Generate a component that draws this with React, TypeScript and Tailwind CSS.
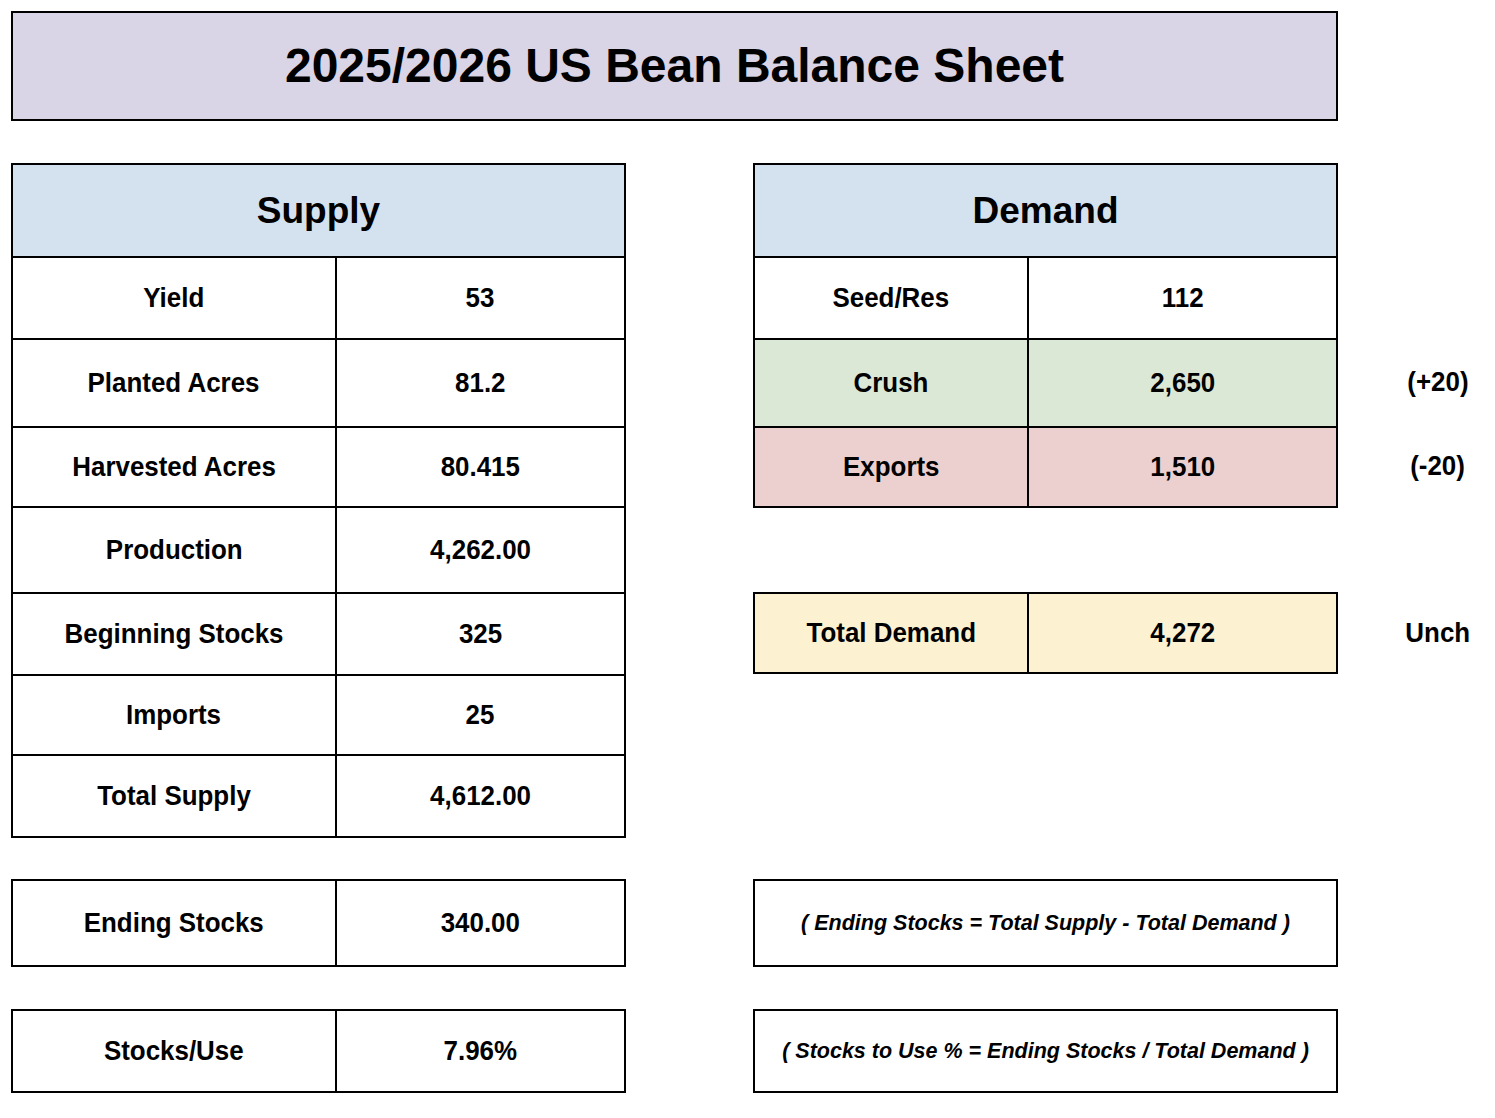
import React from "react";

type Row = {
  label: string;
  value: string;
  h: string;
  bg?: string;
};

const supplyRows: Row[] = [
  { label: "Yield", value: "53", h: "h-[82px]" },
  { label: "Planted Acres", value: "81.2", h: "h-[88px]" },
  { label: "Harvested Acres", value: "80.415", h: "h-[80px]" },
  { label: "Production", value: "4,262.00", h: "h-[86px]" },
  { label: "Beginning Stocks", value: "325", h: "h-[82px]" },
  { label: "Imports", value: "25", h: "h-[80px]" },
  { label: "Total Supply", value: "4,612.00", h: "h-[82px]" },
];

const demandRows: Row[] = [
  { label: "Seed/Res", value: "112", h: "h-[82px]", bg: "bg-white" },
  { label: "Crush", value: "2,650", h: "h-[88px]", bg: "bg-[#dce8d6]" },
  { label: "Exports", value: "1,510", h: "h-[80px]", bg: "bg-[#ecd0d0]" },
];

// the sheet's bold text is a touch narrower than plain Arial bold
const Squeeze = ({ children }: { children: React.ReactNode }) => (
  <span className="inline-block scale-x-[0.96]">{children}</span>
);

const TableRow = ({ row, labelW, top = true }: { row: Row; labelW: string; top?: boolean }) => (
  <div className={`flex ${row.h} ${top ? "border-t-2" : ""} border-black ${row.bg ?? "bg-white"}`}>
    <div className={`${labelW} flex items-center justify-center text-[27px] font-bold`}>
      <Squeeze>{row.label}</Squeeze>
    </div>
    <div className="flex-1 flex items-center justify-center border-l-2 border-black text-[27px] font-bold">
      <Squeeze>{row.value}</Squeeze>
    </div>
  </div>
);

const Formula = ({ text, h, className }: { text: string; h: string; className: string }) => (
  <div className={`${h} border-2 border-black flex items-center justify-center ${className}`}>
    <span className="text-[21.5px] font-bold italic">{text}</span>
  </div>
);

const App = () => {
  return (
    <div className="w-[1495px] min-h-[1118px] bg-white pl-[11px] pt-[11px] text-black font-['Liberation_Sans',Arial,sans-serif]">
      <div className="w-[1327px] h-[110px] border-2 border-black bg-[#d9d4e6] flex items-center justify-center">
        <h1 className="text-[48px] font-bold leading-none">2025/2026 US Bean Balance Sheet</h1>
      </div>

      <div className="flex mt-[42px]">
        {/* supply side */}
        <div className="w-[615px] flex flex-col">
          <div className="border-2 border-black">
            <div className="h-[91px] bg-[#d4e2f0] flex items-center justify-center text-[37px] font-bold">Supply</div>
            {supplyRows.map((r) => (
              <TableRow key={r.label} row={r} labelW="w-[322px]" />
            ))}
          </div>
          <div className="mt-[41px] border-2 border-black">
            <TableRow row={{ label: "Ending Stocks", value: "340.00", h: "h-[84px]" }} labelW="w-[322px]" top={false} />
          </div>
          <div className="mt-[42px] border-2 border-black">
            <TableRow row={{ label: "Stocks/Use", value: "7.96%", h: "h-[80px]" }} labelW="w-[322px]" top={false} />
          </div>
        </div>

        {/* demand side */}
        <div className="w-[585px] ml-[127px] flex flex-col">
          <div className="border-2 border-black">
            <div className="h-[91px] bg-[#d4e2f0] flex items-center justify-center text-[37px] font-bold">Demand</div>
            {demandRows.map((r) => (
              <TableRow key={r.label} row={r} labelW="w-[272px]" />
            ))}
          </div>
          <div className="mt-[84px] border-2 border-black">
            <TableRow
              row={{ label: "Total Demand", value: "4,272", h: "h-[78px]", bg: "bg-[#fcf2d2]" }}
              labelW="w-[272px]"
              top={false}
            />
          </div>
          <Formula text="( Ending Stocks = Total Supply - Total Demand )" h="h-[88px]" className="mt-[205px]" />
          <Formula text="( Stocks to Use % = Ending Stocks / Total Demand )" h="h-[84px]" className="mt-[42px]" />
        </div>

        {/* week-over-week changes */}
        <div className="w-[114px] ml-[43px] flex flex-col text-[27px] font-bold">
          <div className="h-[175px]" />
          <div className="h-[88px] flex items-center justify-center">
            <Squeeze>(+20)</Squeeze>
          </div>
          <div className="h-[80px] flex items-center justify-center">
            <Squeeze>(-20)</Squeeze>
          </div>
          <div className="h-[86px]" />
          <div className="h-[82px] flex items-center justify-center">
            <Squeeze>Unch</Squeeze>
          </div>
        </div>
      </div>
    </div>
  );
};

export default App;
